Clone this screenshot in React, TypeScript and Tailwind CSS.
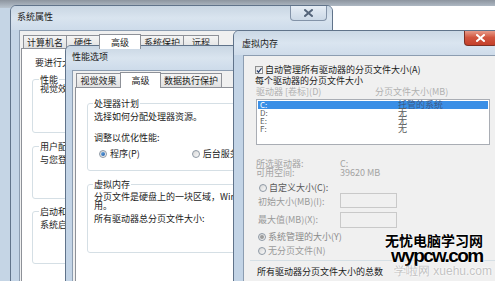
import React from "react";

function Radio({ checked = false, disabled = false }: { checked?: boolean; disabled?: boolean }) {
  return (
    <span className="flex items-center justify-center w-[8px] h-[8px] shrink-0 rounded-full border border-[#8e99a5] bg-gradient-to-br from-[#d6d6d6] to-[#fbfbfb]">
      {checked ? (
        <span
          className={
            disabled
              ? "w-[4px] h-[4px] rounded-full bg-[#9c9c9c]"
              : "w-[4px] h-[4px] rounded-full bg-gradient-to-br from-[#6fb0e8] to-[#1d5aa8]"
          }
        />
      ) : null}
    </span>
  );
}

function CloseGlyph({ color }: { color: string }) {
  return (
    <svg width="9" height="8" viewBox="0 0 9 8">
      <path d="M1 1 L8 7 M8 1 L1 7" stroke={color} strokeWidth="2" strokeLinecap="square" />
    </svg>
  );
}

function TitleBar({ title, children }: { title: string; children?: React.ReactNode }) {
  return (
    <div className="relative h-[24px] shrink-0 bg-gradient-to-b from-[#c9d6e3] via-[#d9e4ef] to-[#cddbea] pl-[6px] pt-[6px] text-[#1b1b1b] leading-[9px]">
      {title}
      {children}
    </div>
  );
}

function WindowA() {
  return (
    <div className="absolute left-[10px] top-[5px] w-[323px] h-[300px] flex flex-col border border-[#60738a] rounded-t-[6px] bg-[#c3d4e6] overflow-hidden">
      <TitleBar title="系统属性">
        <div className="absolute right-[5px] top-0 w-[37px] h-[15px] flex items-center justify-center rounded-b-[4px] border border-t-0 border-[#8393a8] bg-gradient-to-b from-[#e6edf5] to-[#cbd8e6]">
          <CloseGlyph color="#55657a" />
        </div>
      </TitleBar>
      <div className="flex-1 mx-[8px] border border-[#8c9db1] bg-[#f0f0f0] flex flex-col">
        <div className="flex items-end h-[17px] pl-[3px]">
          <div className="w-[44px] h-[13px] border border-b-0 border-[#8e9198] bg-gradient-to-b from-[#f5f5f5] to-[#e1e1e1] flex items-center justify-center leading-[9px]">计算机名</div>
          <div className="w-[34px] h-[13px] -ml-px border border-b-0 border-[#8e9198] bg-gradient-to-b from-[#f5f5f5] to-[#e1e1e1] flex items-center justify-center leading-[9px]">硬件</div>
          <div className="relative z-10 w-[42px] h-[15px] -mx-[1px] -mb-px border border-b-0 border-[#8e9198] bg-white flex items-center justify-center leading-[9px]">高级</div>
          <div className="w-[44px] h-[13px] border border-b-0 border-[#8e9198] bg-gradient-to-b from-[#f5f5f5] to-[#e1e1e1] flex items-center justify-center leading-[9px]">系统保护</div>
          <div className="w-[36px] h-[13px] -ml-px border border-b-0 border-[#8e9198] bg-gradient-to-b from-[#f5f5f5] to-[#e1e1e1] flex items-center justify-center leading-[9px]">远程</div>
        </div>
        <div className="flex-1 ml-[1px] mr-[2px] border border-[#8e9198] bg-white pl-[10px] pr-[8px]">
          <div className="mt-[9px] pl-[3px] leading-[10px] whitespace-nowrap">要进行大多数更改，您必须作为管理员登录。</div>
          <div className="mt-[11px] h-[54px] border border-[#d5dfe5] rounded-[3px]">
            <div className="-mt-[5px] ml-[6px] px-[1px] w-fit bg-white leading-[9px]">性能</div>
            <div className="pl-[7px] leading-[10px] whitespace-nowrap">视觉效果，处理器计划，内存使用，以及虚拟内存</div>
          </div>
          <div className="mt-[13px] h-[53px] border border-[#d5dfe5] rounded-[3px]">
            <div className="-mt-[5px] ml-[6px] px-[1px] w-fit bg-white leading-[9px]">用户配置文件</div>
            <div className="mt-[4px] pl-[7px] leading-[10px] whitespace-nowrap">与您登录有关的桌面设置</div>
          </div>
          <div className="mt-[12px] h-[53px] border border-[#d5dfe5] rounded-[3px]">
            <div className="-mt-[5px] ml-[6px] px-[1px] w-fit bg-white leading-[9px]">启动和故障恢复</div>
            <div className="mt-[4px] pl-[7px] leading-[10px] whitespace-nowrap">系统启动、系统失败和调试信息</div>
          </div>
        </div>
      </div>
    </div>
  );
}

function WindowB() {
  return (
    <div className="absolute left-[65px] top-[45px] w-[182px] h-[260px] flex flex-col border border-[#60738a] rounded-t-[6px] bg-[#c3d4e6] overflow-hidden">
      <TitleBar title="性能选项" />
      <div className="flex-1 ml-[6px] mr-[6px] border border-[#8c9db1] bg-[#f0f0f0] flex flex-col">
        <div className="flex items-end h-[16px] pl-[3px]">
          <div className="w-[45px] h-[14px] border border-b-0 border-[#8e9198] bg-gradient-to-b from-[#f5f5f5] to-[#e1e1e1] flex items-center justify-center leading-[9px]">视觉效果</div>
          <div className="relative z-10 w-[41px] h-[16px] -mx-[1px] -mb-px border border-b-0 border-[#8e9198] bg-white flex items-center justify-center leading-[9px]">高级</div>
          <div className="w-[62px] h-[14px] border border-b-0 border-[#8e9198] bg-gradient-to-b from-[#f5f5f5] to-[#e1e1e1] flex items-center justify-center leading-[9px] whitespace-nowrap">数据执行保护</div>
        </div>
        <div className="flex-1 ml-[2px] border border-[#8e9198] bg-white pl-[11px]">
          <div className="mt-[15px] h-[68px] -mr-[20px] border border-[#d5dfe5] rounded-[3px]">
            <div className="-mt-[5px] ml-[5px] px-[1px] w-fit bg-white leading-[9px]">处理器计划</div>
            <div className="mt-[4px] pl-[6px] leading-[10px] whitespace-nowrap">选择如何分配处理器资源。</div>
            <div className="mt-[11px] pl-[6px] leading-[10px] whitespace-nowrap">调整以优化性能:</div>
            <div className="mt-[6px] flex items-center leading-[10px] whitespace-nowrap">
              <div className="ml-[11px] flex items-center gap-[3px]">
                <Radio checked />
                <span>程序(P)</span>
              </div>
              <div className="ml-[52px] flex items-center gap-[3px]">
                <Radio />
                <span>后台服务</span>
              </div>
            </div>
          </div>
          <div className="mt-[13px] h-[69px] -mr-[20px] border border-[#d5dfe5] rounded-[3px]">
            <div className="-mt-[5px] ml-[5px] px-[1px] w-fit bg-white leading-[9px]">虚拟内存</div>
            <div className="mt-[3px] pl-[6px] leading-[9px] whitespace-nowrap">分页文件是硬盘上的一块区域，Windows 当作 RAM 使</div>
            <div className="pl-[6px] leading-[9px] whitespace-nowrap">用。</div>
            <div className="mt-[4px] pl-[6px] leading-[10px] whitespace-nowrap">所有驱动器总分页文件大小:</div>
          </div>
        </div>
      </div>
    </div>
  );
}

function WindowC() {
  return (
    <div className="absolute left-[233px] top-[30px] w-[272px] h-[270px] flex flex-col border border-[#60738a] rounded-t-[6px] bg-[#c3d4e6] overflow-hidden">
      <div className="relative h-[24px] shrink-0 bg-gradient-to-b from-[#cbd8e5] via-[#dae5f0] to-[#cfdcea] pl-[8px] pt-[8px] leading-[9px] text-[#1b1b1b]">
        虚拟内存
        <div className="absolute right-[7px] -top-px w-[33px] h-[16px] flex items-center justify-center rounded-b-[4px] border border-t-0 border-[#7d3024] bg-gradient-to-b from-[#e9a494] via-[#d1553f] to-[#c4402b]">
          <CloseGlyph color="#ffffff" />
        </div>
      </div>
      <div className="flex-1 ml-[9px] border border-[#8c9db1] bg-[#f0f0f0] flex flex-col">
        <div className="mt-[9px] ml-[11px] flex items-center gap-[2px] leading-[10px] whitespace-nowrap">
          <span className="relative w-[8px] h-[8px] border border-[#8e8f8f] bg-gradient-to-br from-[#e2e2e2] to-white flex items-center justify-center">
            <svg width="7" height="7" viewBox="0 0 7 7">
              <path d="M1 3.5 L3 5.5 L6.5 0.8" fill="none" stroke="#2a3f6b" strokeWidth="1.4" />
            </svg>
          </span>
          <span>自动管理所有驱动器的分页文件大小(A)</span>
        </div>
        <div className="mt-[1px] ml-[11px] leading-[10px] whitespace-nowrap">每个驱动器的分页文件大小</div>
        <div className="mt-[1px] ml-[12px] flex leading-[10px] whitespace-nowrap text-[#b0b0b0]">
          <span className="w-[119px]">驱动器 [卷标](D)</span>
          <span>分页文件大小(MB)</span>
        </div>
        <div className="mt-[2px] ml-[12px] w-[234px] h-[46px] border border-[#a9adb4] bg-white pt-[1px] px-px">
          <div className="flex h-[8px] bg-[#3a8fe6] leading-[8px] text-[8px] text-white">
            <span className="w-[140px] pl-[2px]">C:</span>
            <span className="text-[9px] text-[#3d5a88]">托管的系统</span>
          </div>
          <div className="flex h-[8px] leading-[8px] text-[8px] text-[#5d5d5d]">
            <span className="w-[140px] pl-[2px]">D:</span>
            <span className="text-[9px]">无</span>
          </div>
          <div className="flex h-[8px] leading-[8px] text-[8px] text-[#5d5d5d]">
            <span className="w-[140px] pl-[2px]">E:</span>
            <span className="text-[9px]">无</span>
          </div>
          <div className="flex h-[8px] leading-[8px] text-[8px] text-[#5d5d5d]">
            <span className="w-[140px] pl-[2px]">F:</span>
            <span className="text-[9px]">无</span>
          </div>
        </div>
        <div className="mt-[14px] ml-[12px] flex leading-[9px] whitespace-nowrap text-[#a3a3a3]">
          <span className="w-[84px]">所选驱动器:</span>
          <span>C:</span>
        </div>
        <div className="ml-[12px] flex leading-[9px] whitespace-nowrap text-[#a3a3a3]">
          <span className="w-[84px]">可用空间:</span>
          <span>39620 MB</span>
        </div>
        <div className="mt-[6px] ml-[15px] flex items-center gap-[2px] leading-[10px] whitespace-nowrap text-[#5a5a5a]">
          <Radio />
          <span>自定义大小(C):</span>
        </div>
        <div className="ml-[14px] flex items-end leading-[10px] whitespace-nowrap text-[#9a9a9a]">
          <span className="w-[82px] pb-[1px]">初始大小(MB)(I):</span>
          <span className="w-[57px] h-[15px] border border-[#c9c9c9] bg-[#f0f0f0]" />
        </div>
        <div className="mt-[4px] ml-[14px] flex items-center leading-[10px] whitespace-nowrap text-[#9a9a9a]">
          <span className="w-[82px]">最大值(MB)(X):</span>
          <span className="w-[57px] h-[16px] border border-[#c9c9c9] bg-[#f0f0f0]" />
        </div>
        <div className="mt-[4px] ml-[14px] flex items-center gap-[2px] leading-[10px] whitespace-nowrap text-[#8a8a8a]">
          <Radio checked disabled />
          <span>系统管理的大小(Y)</span>
        </div>
        <div className="mt-[4px] ml-[14px] flex items-center gap-[2px] leading-[10px] whitespace-nowrap text-[#9a9a9a]">
          <Radio />
          <span>无分页文件(N)</span>
        </div>
        <div className="mt-[4px] ml-[6px] border-t border-[#d5dfe5]" />
        <div className="mt-[6px] ml-[13px] leading-[10px] whitespace-nowrap text-[#1b1b1b]">所有驱动器分页文件大小的总数</div>
      </div>
    </div>
  );
}

export default function App() {
  return (
    <div className="relative w-[495px] h-[281px] overflow-hidden bg-[#c5d5e5] text-[9px] text-[#1b1b1b] font-['Noto_Sans_CJK_SC',sans-serif]">
      <div className="absolute left-0 top-0 w-[495px] h-[8px] bg-gradient-to-b from-[#8d959f] to-[#b9c4cf]" />
      <div className="absolute left-[330px] top-[6px] w-[165px] h-[30px] bg-white" />
      <WindowA />
      <WindowB />
      <WindowC />
      <div className="absolute left-[385px] top-[232px] flex flex-col items-start [text-shadow:0_0_2px_#ffffff,0_0_2px_#ffffff]">
        <div className="text-[14px] leading-[17px] font-bold text-black">无忧电脑学习网</div>
        <div className="ml-[6px] -mt-[3px] text-[19px] leading-[19px] font-bold tracking-[-1.6px] text-black font-['Liberation_Sans',sans-serif]">wypcw.com</div>
        <div className="ml-[9px] -mt-px text-[12px] leading-[14px] text-[#c3c3c3] font-['Liberation_Sans',sans-serif]">学啦网 xuehu.com</div>
      </div>
    </div>
  );
}
